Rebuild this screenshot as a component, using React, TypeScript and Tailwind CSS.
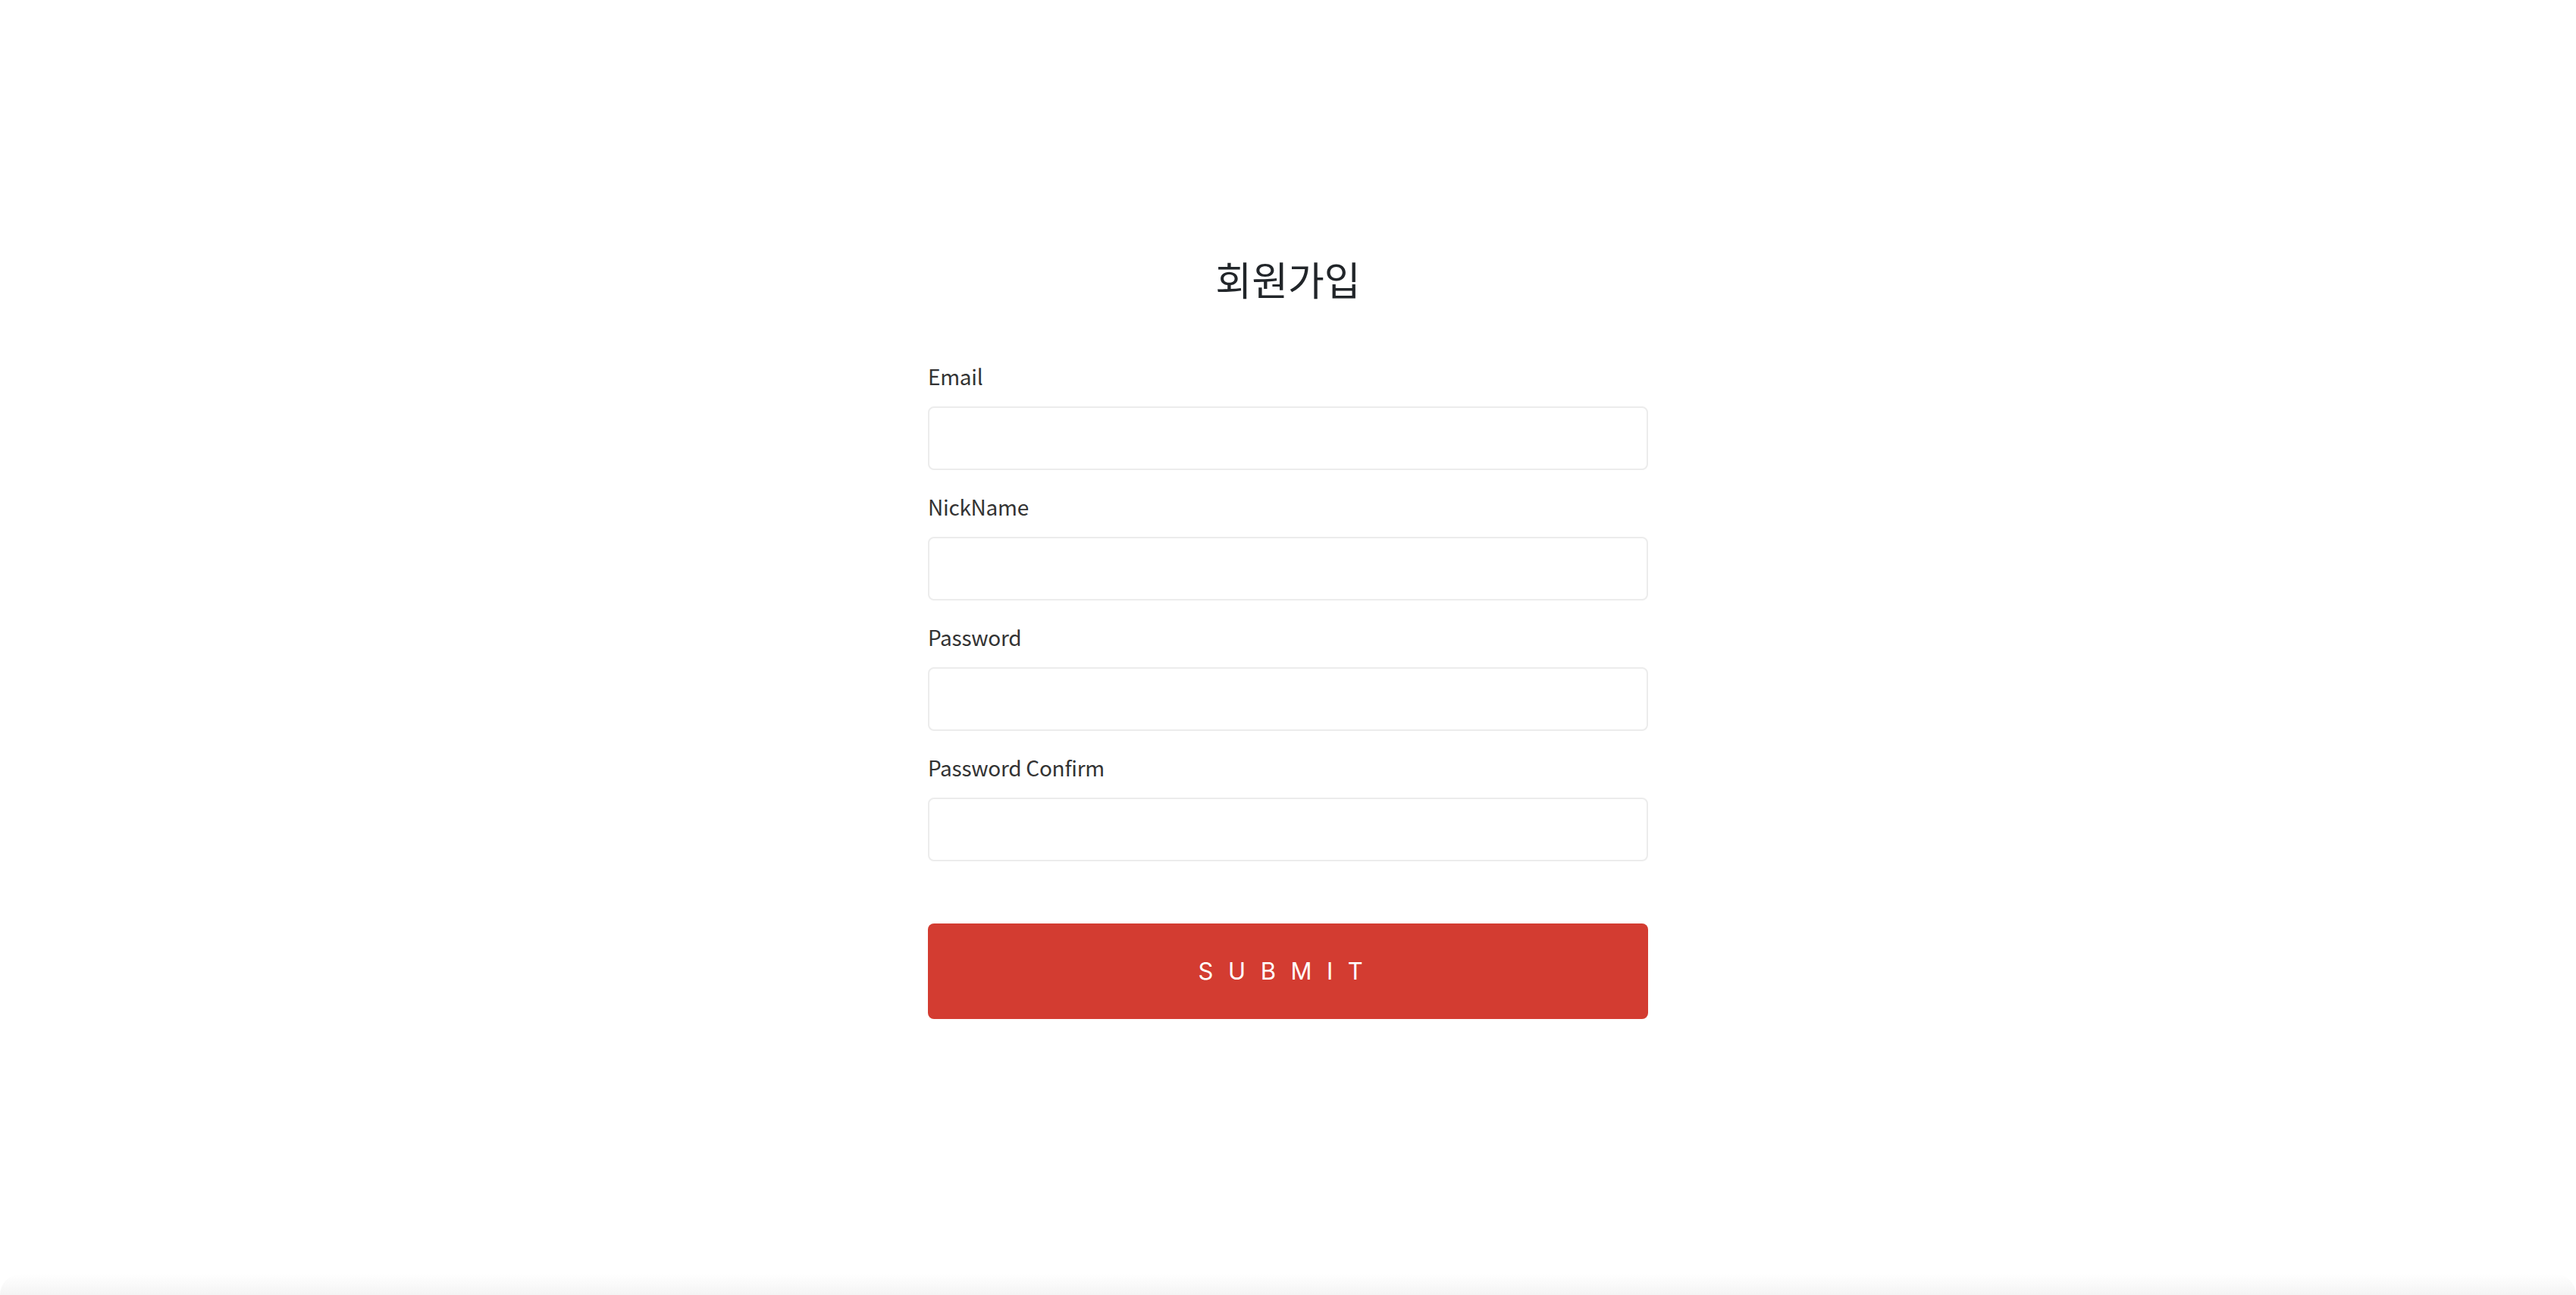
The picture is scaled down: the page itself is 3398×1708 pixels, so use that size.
import { useState } from "react";

const fields = [
  { id: "email", label: "Email", type: "email" },
  { id: "nickname", label: "NickName", type: "text" },
  { id: "password", label: "Password", type: "password" },
  { id: "passwordConfirm", label: "Password Confirm", type: "password" },
];

export default function App() {
  const [values, setValues] = useState<Record<string, string>>({});

  return (
    <div className="min-h-[1708px] flex flex-col bg-white font-['Noto_Sans_CJK_KR','Noto_Sans',sans-serif]">
      <main className="flex-1 flex justify-center pt-[336px]">
        <form className="w-[950px] flex flex-col" onSubmit={(e) => e.preventDefault()}>
          <h1 className="text-[52px] leading-[64px] text-center text-[#212529] font-normal mb-[78px]">
            회원가입
          </h1>
          {fields.map((field) => (
            <div key={field.id} className="flex flex-col mb-[30px]">
              <label
                htmlFor={field.id}
                className="text-[28px] leading-[36px] tracking-[-0.01em] text-[#333] mb-[22px]"
              >
                {field.label}
              </label>
              <input
                id={field.id}
                type={field.type}
                value={values[field.id] ?? ""}
                onChange={(e) => setValues({ ...values, [field.id]: e.target.value })}
                className="h-[84px] px-5 border-2 border-[#ececec] rounded-[8px] text-[28px] outline-none"
              />
            </div>
          ))}
          {/* submit */}
          <button
            type="submit"
            className="mt-[52px] h-[126px] rounded-[8px] bg-[#d33c31] text-white text-[31px] tracking-[0.63em] font-['Inter',sans-serif]"
          >
            SUBMIT
          </button>
        </form>
      </main>
      <div className="h-[28px] bg-gradient-to-b from-white to-[#f4f4f4] rounded-t-[40px]" />
    </div>
  );
}
